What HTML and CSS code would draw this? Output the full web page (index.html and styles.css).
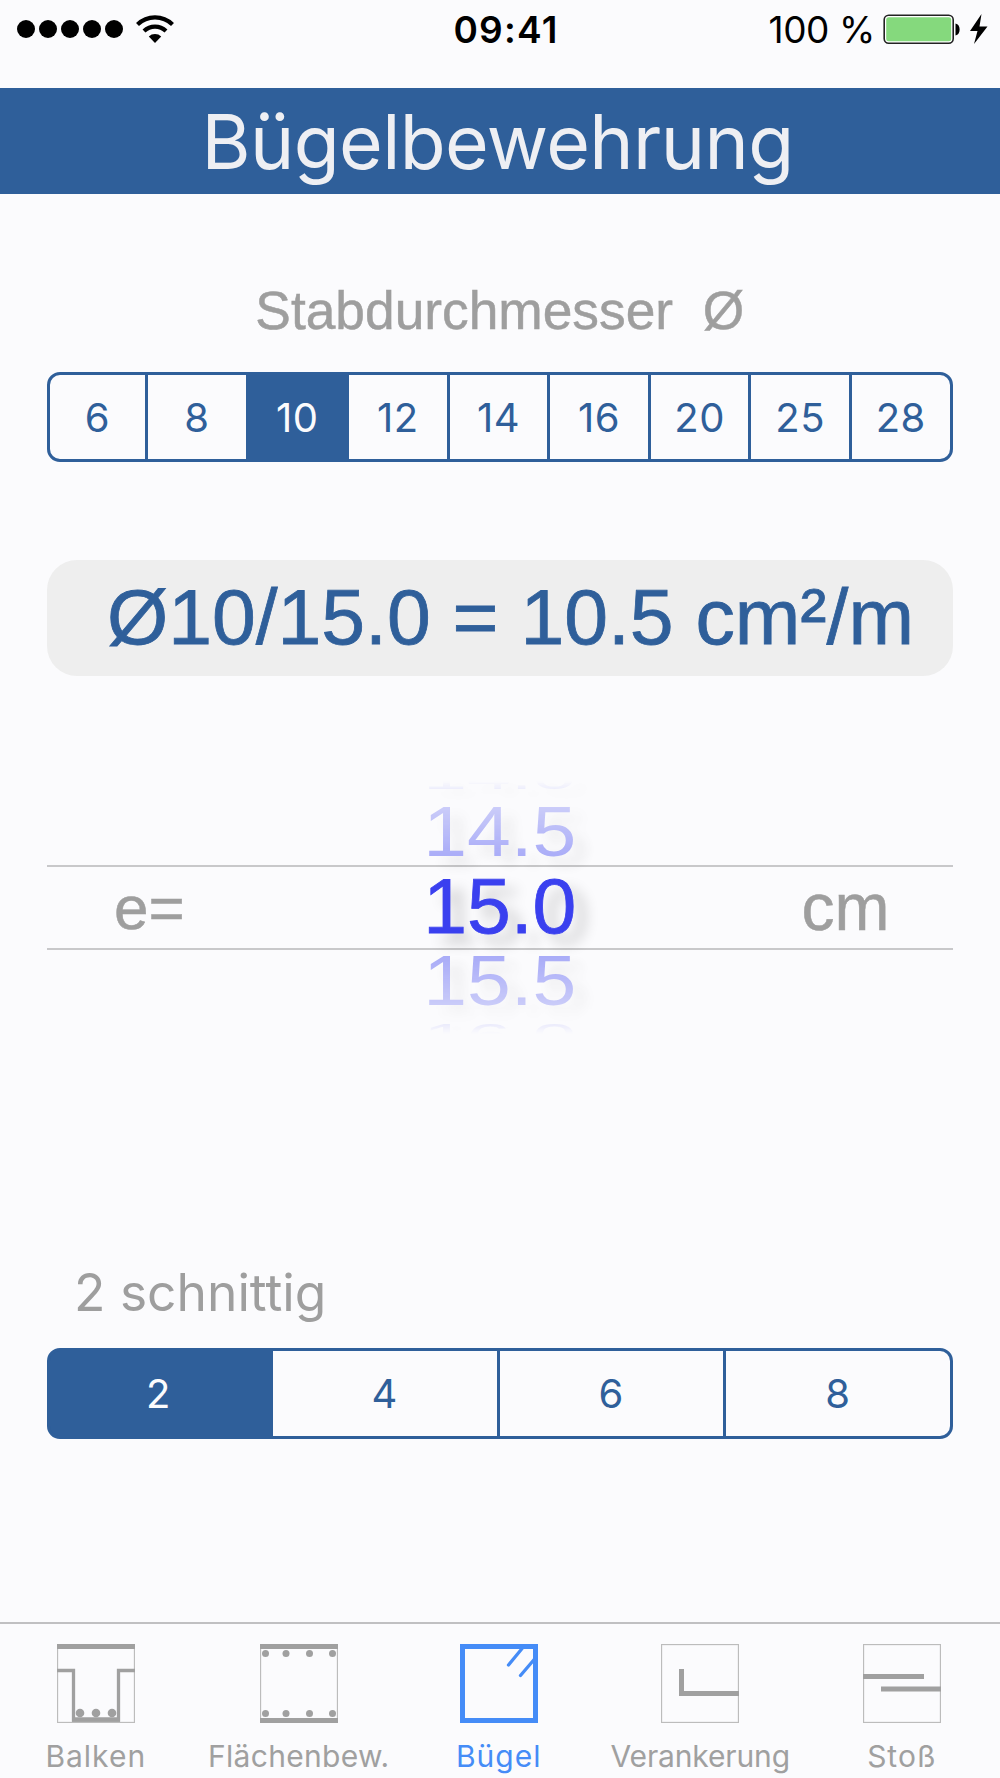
FILE: index.html
```html
<!DOCTYPE html>
<html lang="de">
<head>
    <meta charset="UTF-8">
    <meta name="viewport" content="width=device-width, initial-scale=1.0">
    <title>Bügelbewehrung</title>
    <link rel="stylesheet" href="styles.css">
</head>
<body>
    <div class="status-bar">
        <div class="signal">
            <span class="dot"></span>
            <span class="dot"></span>
            <span class="dot"></span>
            <span class="dot"></span>
            <span class="dot"></span>
            <svg class="wifi" width="38" height="28" viewBox="0 0 38 28">
                <path d="M1.5 9.5 A25 25 0 0 1 36.5 9.5" fill="none" stroke="#000" stroke-width="4.2"/>
                <path d="M8 16 A16 16 0 0 1 30 16" fill="none" stroke="#000" stroke-width="4.2"/>
                <path d="M19 28 L12.8 21.5 A9 9 0 0 1 25.2 21.5 Z"/>
            </svg>
        </div>
        <div class="time">09:41</div>
        <div class="power">
            <span class="percent">100 %</span>
            <svg class="battery" width="106" height="32" viewBox="0 0 106 32">
                <rect x="1.2" y="1.2" width="69" height="28" rx="4.5" fill="#fff" stroke="#222" stroke-width="1.6"/>
                <rect x="3.2" y="3.2" width="65" height="24" rx="2.5" fill="#85d97d"/>
                <path d="M72.5 9.5 C78 10 78 21 72.5 21.5 Z"/>
                <path d="M98.5 0 L87 17 H94.5 L91 30 L104.5 12.5 H96.5 Z"/>
            </svg>
        </div>
    </div>

    <h1 class="title">Bügelbewehrung</h1>

    <div class="content">
        <div class="label diameter-label">Stabdurchmesser&nbsp; Ø</div>
        <div class="segments diameter">
            <button>6</button>
            <button>8</button>
            <button class="active">10</button>
            <button>12</button>
            <button>14</button>
            <button>16</button>
            <button>20</button>
            <button>25</button>
            <button>28</button>
        </div>

        <div class="result">Ø10/15.0 = 10.5 cm²/m</div>

        <div class="picker">
            <div class="side left">e=</div>
            <div class="wheel">
                <div class="item far">14.0</div>
                <div class="item near">14.5</div>
                <div class="item selected">15.0</div>
                <div class="item near below">15.5</div>
                <div class="item far">16.0</div>
            </div>
            <div class="side right">cm</div>
        </div>

        <div class="label cuts-label">2 schnittig</div>
        <div class="segments cuts">
            <button class="active">2</button>
            <button>4</button>
            <button>6</button>
            <button>8</button>
        </div>
    </div>

    <nav class="tab-bar">
        <div class="tab">
            <svg width="78" height="79" viewBox="0 0 78 79">
                <rect x="0.5" y="0.5" width="77" height="78" class="thin"/>
                <rect x="0" y="0" width="78" height="5" class="fill"/>
                <path d="M0 26.5 H16.5 V76 H61.5 V26.5 H78" class="line" stroke-width="3.3"/>
                <path d="M15 75.5 H63" class="line" stroke-width="4.5"/>
                <circle cx="23" cy="69" r="4.3" class="fill"/>
                <circle cx="39" cy="69" r="4.3" class="fill"/>
                <circle cx="55" cy="69" r="4.3" class="fill"/>
            </svg>
            <span class="wide">Balken</span>
        </div>
        <div class="tab slab">
            <svg width="78" height="79" viewBox="0 0 78 79">
                <rect x="0.5" y="0.5" width="77" height="78" class="thin"/>
                <rect x="0" y="0" width="78" height="5" class="fill"/>
                <rect x="0" y="74" width="78" height="5" class="fill"/>
                <circle cx="5.5" cy="9.5" r="3.5" class="fill"/>
                <circle cx="26" cy="9.5" r="3.5" class="fill"/>
                <circle cx="49.5" cy="9.5" r="3.5" class="fill"/>
                <circle cx="72.5" cy="9.5" r="3.5" class="fill"/>
                <circle cx="5.5" cy="69.5" r="3.5" class="fill"/>
                <circle cx="26" cy="69.5" r="3.5" class="fill"/>
                <circle cx="49.5" cy="69.5" r="3.5" class="fill"/>
                <circle cx="72.5" cy="69.5" r="3.5" class="fill"/>
            </svg>
            <span>Flächenbew.</span>
        </div>
        <div class="tab current">
            <svg width="78" height="79" viewBox="0 0 78 79">
                <rect x="2.5" y="2.5" width="73" height="74" class="line" stroke-width="5"/>
                <path d="M62.5 4 L48.5 21 M75 14.5 L60.5 31.5" class="line" stroke-width="3.3" stroke-linecap="round"/>
            </svg>
            <span class="wide">Bügel</span>
        </div>
        <div class="tab">
            <svg width="78" height="79" viewBox="0 0 78 79">
                <rect x="0.5" y="0.5" width="77" height="78" class="thin"/>
                <path d="M20.5 25 V49.5 H78" class="line" stroke-width="5"/>
            </svg>
            <span class="tight">Verankerung</span>
        </div>
        <div class="tab">
            <svg width="78" height="79" viewBox="0 0 78 79">
                <rect x="0.5" y="0.5" width="77" height="78" class="thin"/>
                <path d="M0 32.5 H61 M18 45 H78" class="line" stroke-width="5"/>
            </svg>
            <span class="wide">Stoß</span>
        </div>
    </nav>
</body>
</html>
```

FILE: styles.css
```css
* {
    box-sizing: border-box;
}
body {
    margin: 0;
    width: 1000px;
    height: 1778px;
    display: flex;
    flex-direction: column;
    overflow: hidden;
    background-color: #fbfbfd;
    font-family: Inter, sans-serif;
}
.status-bar {
    height: 88px;
    padding: 1px 11px 0 17px;
    display: grid;
    grid-template-columns: 1fr auto 1fr;
    align-items: start;
}
.signal {
    display: flex;
    align-items: center;
    gap: 4px;
    padding-top: 14px;
}
.dot {
    width: 18px;
    height: 18px;
    border-radius: 50%;
    background: black;
}
.wifi {
    margin-left: 9px;
}
.time {
    padding-left: 6px;
    font-size: 37px;
    font-weight: 600;
    line-height: 57px;
    letter-spacing: 1.2px;
}
.power {
    display: flex;
    justify-content: flex-end;
    align-items: center;
    gap: 8px;
    height: 57px;
}
.percent {
    font-size: 37px;
    letter-spacing: -0.4px;
}
.title {
    margin: 0;
    height: 106px;
    padding-right: 5px;
    line-height: 107px;
    font-size: 75px;
    font-weight: 400;
    letter-spacing: -0.6px;
    text-align: center;
    background-color: #2f5f9a;
    color: #eeeff3;
}
.content {
    flex: 1;
    padding: 0 47.5px 0 47px;
}
.label {
    color: #9e9e9e;
    white-space: pre;
}
.diameter-label {
    margin-top: 86px;
    height: 92px;
    line-height: 62px;
    font-family: "Liberation Sans", Arial, sans-serif;
    font-size: 53.3px;
    text-align: center;
    -webkit-text-stroke: 0.5px #9e9e9e;
}
.segments {
    display: flex;
    height: 90px;
    border: 3px solid #2f5f9a;
    border-radius: 13px;
    background-color: #fbfbfd;
    overflow: hidden;
}
.segments button {
    flex: 1;
    padding: 0;
    border: none;
    border-left: 3px solid #2f5f9a;
    background: none;
    color: #2f5f9a;
    font-family: Inter, sans-serif;
    font-size: 40px;
    letter-spacing: 0.5px;
}
.segments button:first-child {
    border-left: none;
}
.diameter button:first-child {
    flex: 0 0 95px;
}
.cuts button:first-child {
    flex: 0 0 220px;
    padding-right: 3px;
}
.segments .active {
    background-color: #2f5f9a;
    color: #fbfbfd;
}
.result {
    margin-top: 98px;
    height: 116px;
    padding-left: 60px;
    border-radius: 30px;
    background-color: #eeeeee;
    color: #2f5f9a;
    font-family: "Liberation Sans", Arial, sans-serif;
    font-size: 78.7px;
    line-height: 114px;
    white-space: nowrap;
    -webkit-text-stroke: 0.8px #2f5f9a;
}
.picker {
    margin-top: 105px;
    height: 260px;
    display: grid;
    grid-template-columns: 1fr 240px 1fr;
    font-family: "Liberation Sans", Arial, sans-serif;
    background: linear-gradient(#c8c8ca, #c8c8ca) 0 84px / 100% 2px no-repeat,
                linear-gradient(#c8c8ca, #c8c8ca) 0 167px / 100% 2px no-repeat;
}
.side {
    padding-top: 85px;
    line-height: 83px;
    font-size: 66px;
    color: #9e9e9e;
    -webkit-text-stroke: 0.5px #9e9e9e;
}
.left {
    padding-left: 67px;
    font-size: 62px;
}
.right {
    padding-right: 63px;
    text-align: right;
}
.wheel {
    margin-top: -24px;
    display: flex;
    flex-direction: column;
    text-align: center;
    font-size: 78.7px;
    color: #3a40ef;
    -webkit-mask-image: linear-gradient(transparent 24px, rgba(0,0,0,0.55) 49px, #000 108px, #000 192px, rgba(0,0,0,0.55) 250px, transparent 277px);
    mask-image: linear-gradient(transparent 24px, rgba(0,0,0,0.55) 49px, #000 108px, #000 192px, rgba(0,0,0,0.55) 250px, transparent 277px);
}
.item {
    flex: none;
    height: 82px;
    line-height: 82px;
    text-shadow: 12px 10px 14px rgba(0, 0, 0, 0.2);
}
.selected {
    -webkit-text-stroke: 0.8px #3a40ef;
}
/* rows turn away from the viewer above and below the selection */
.near {
    height: 66px;
    line-height: 66px;
    opacity: 0.45;
    transform: scaleY(0.9);
}
.below {
    height: 68px;
    line-height: 68px;
}
.far {
    height: 42px;
    line-height: 42px;
    opacity: 0.4;
    transform: scaleY(0.42);
}
.cuts-label {
    margin-top: 220px;
    height: 87px;
    padding-left: 27px;
    font-size: 51.5px;
    line-height: 62px;
}
/* first cell is filled, so paint under the rounded corners too */
.cuts {
    height: 91px;
    background: linear-gradient(to right, #2f5f9a 50px, #fbfbfd 50px);
    background-origin: border-box;
}
.tab-bar {
    height: 156px;
    display: flex;
    padding: 20px 0 0;
    border-top: 2px solid #c0c0c2;
}
.tab {
    flex: none;
    width: 201.5px;
    display: flex;
    flex-direction: column;
    align-items: center;
    color: #a0a0a0;
    font-size: 30px;
}
.tab:first-child {
    margin-left: -5px;
}
.slab {
    padding-left: 3px;
}
.tab span {
    margin-top: 15px;
    line-height: 36px;
    letter-spacing: 0.3px;
}
.tab .wide {
    letter-spacing: 1px;
}
.tab .tight {
    letter-spacing: -0.15px;
}
.current {
    color: #458cf7;
}
.thin {
    fill: none;
    stroke: #bcbcbc;
    stroke-width: 1.3;
}
.line {
    fill: none;
    stroke: currentColor;
}
.fill {
    fill: currentColor;
}
```
